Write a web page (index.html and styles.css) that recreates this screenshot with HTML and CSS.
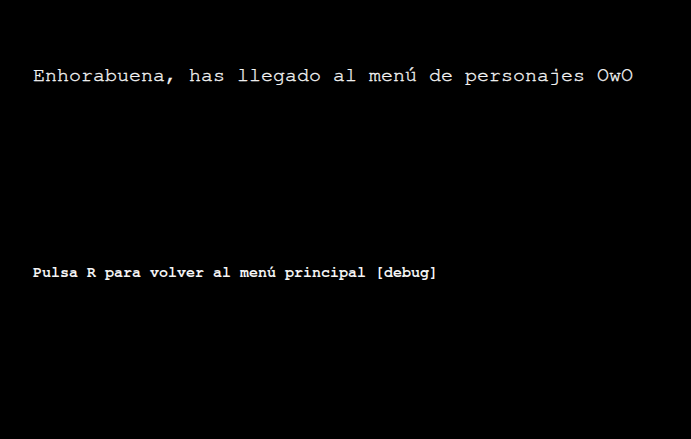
FILE: index.html
```html
<!DOCTYPE html>
<html>
<head>
<meta charset="utf-8">
<link rel="stylesheet" href="styles.css">
</head>
<body>
<main class="screen">
  <h1 class="title">Enhorabuena, has llegado al menú de personajes OwO</h1>
  <p class="hint">Pulsa R para volver al menú principal [debug]</p>
</main>
</body>
</html>
```
FILE: styles.css
```css
html, body {
  margin: 0;
  padding: 0;
  background: #000;
  height: 100%;
}
.screen {
  display: flex;
  flex-direction: column;
  padding: 64px 0 0 33px;
  color: #f4f4f4;
  font-family: "Nimbus Mono PS", "FreeMono", "Courier", "Liberation Mono", monospace;
}
.title {
  margin: 0;
  font-size: 20px;
  font-weight: normal;
  line-height: 23px;
  -webkit-text-stroke: 0.35px #f4f4f4;
}
.hint {
  margin: 177px 0 0 0;
  font-size: 15px;
  font-weight: bold;
  line-height: 17px;
}
```
